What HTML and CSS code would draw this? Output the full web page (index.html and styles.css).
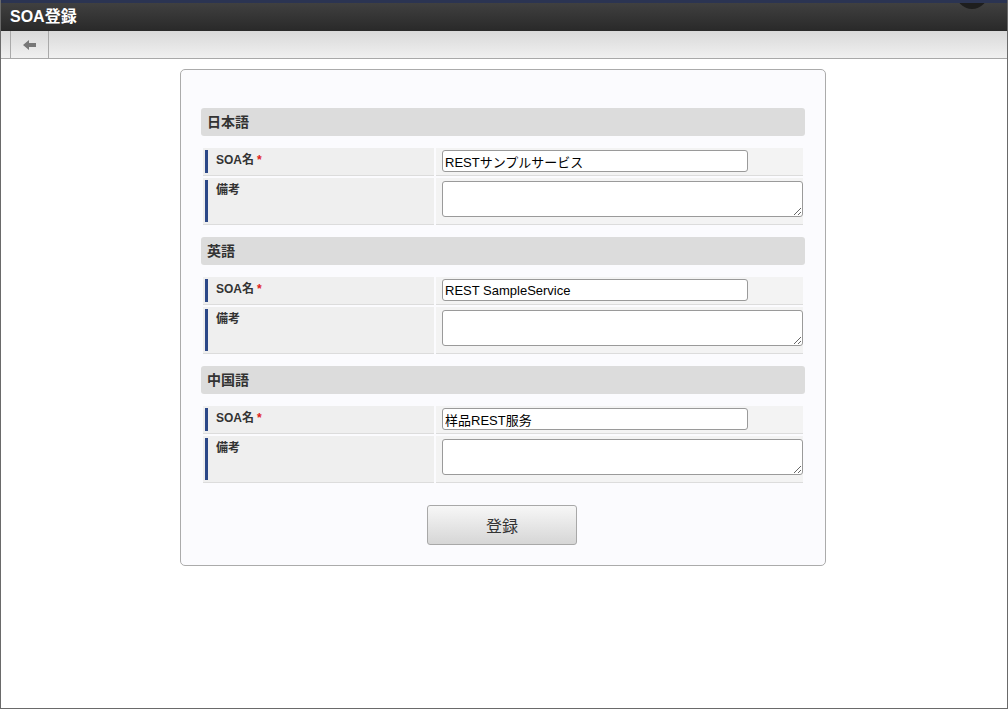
FILE: index.html
```html
<!DOCTYPE html>
<html lang="ja">
<head>
<meta charset="utf-8">
<title>SOA登録</title>
<link rel="stylesheet" href="styles.css">
</head>
<body>
<div class="frame">
  <header class="titlebar">
    <h1 class="title">SOA登録</h1>
    <span class="orb"></span>
  </header>
  <nav class="toolbar">
    <button class="back" type="button" aria-label="戻る">
      <svg width="14" height="12" viewBox="0 0 14 12"><path d="M0 6 L6 1 L6 4 L13 4 L13 8 L6 8 L6 11 Z" fill="#777"/></svg>
    </button>
  </nav>
  <main class="content">
    <section class="card">
      <div class="group">
        <h2 class="group-title">日本語</h2>
        <table class="form">
          <tr class="row-short">
            <th class="label"><div class="label-inner">SOA名<span class="req">*</span></div></th>
            <td class="value"><input class="text" type="text" value="RESTサンプルサービス"></td>
          </tr>
          <tr class="row-tall">
            <th class="label"><div class="label-inner">備考</div></th>
            <td class="value"><textarea class="area"></textarea></td>
          </tr>
        </table>
      </div>
      <div class="group">
        <h2 class="group-title">英語</h2>
        <table class="form">
          <tr class="row-short">
            <th class="label"><div class="label-inner">SOA名<span class="req">*</span></div></th>
            <td class="value"><input class="text" type="text" value="REST SampleService"></td>
          </tr>
          <tr class="row-tall">
            <th class="label"><div class="label-inner">備考</div></th>
            <td class="value"><textarea class="area"></textarea></td>
          </tr>
        </table>
      </div>
      <div class="group">
        <h2 class="group-title">中国語</h2>
        <table class="form">
          <tr class="row-short">
            <th class="label"><div class="label-inner">SOA名<span class="req">*</span></div></th>
            <td class="value"><input class="text" type="text" value="样品REST服务"></td>
          </tr>
          <tr class="row-tall">
            <th class="label"><div class="label-inner">備考</div></th>
            <td class="value"><textarea class="area"></textarea></td>
          </tr>
        </table>
      </div>
      <div class="actions">
        <button class="submit" type="button">登録</button>
      </div>
    </section>
  </main>
</div>
</body>
</html>
```

FILE: styles.css
```css
* { box-sizing: border-box; }
html, body { margin: 0; padding: 0; }
body {
  font-family: "Liberation Sans", "Noto Sans CJK JP", Arial, sans-serif;
  color: #333;
  background: #fff;
}
.frame {
  width: 1008px;
  height: 709px;
  border: 1px solid #6a6a6a;
  border-top: none;
  display: flex;
  flex-direction: column;
  overflow: hidden;
}
.titlebar {
  position: relative;
  height: 31px;
  margin: 0 -1px;
  border-top: 3px solid #2b3452;
  background: linear-gradient(#404040, #292929);
  display: flex;
  align-items: center;
  overflow: hidden;
}
.title {
  margin: 0 0 0 10px;
  font-size: 16px;
  line-height: 20px;
  font-weight: bold;
  color: #fff;
}
.orb {
  position: absolute;
  left: 956px;
  top: -26px;
  width: 32px;
  height: 32px;
  border-radius: 50%;
  background: #1e1e1e;
}
.toolbar {
  height: 28px;
  background: linear-gradient(#d9d9d9, #f0f0f0);
  border-bottom: 1px solid #a8a8a8;
  padding-left: 9px;
  display: flex;
}
.back {
  width: 39px;
  height: 27px;
  margin: 0;
  padding: 0;
  border: none;
  border-left: 1px solid #a9a9a9;
  border-right: 1px solid #a9a9a9;
  background: transparent;
  display: flex;
  align-items: center;
  justify-content: center;
}
.content {
  flex: 1;
  padding-top: 10px;
  padding-right: 2px;
  display: flex;
  justify-content: center;
}
.card {
  width: 646px;
  height: 497px;
  border: 1px solid #ababab;
  border-radius: 5px;
  background: #fbfbfe;
  padding: 38px 20px 20px 20px;
  display: flex;
  flex-direction: column;
}
.group { margin-bottom: 10px; }
.group-title {
  margin: 0;
  height: 28px;
  background: #dcdcdc;
  border-radius: 3px;
  padding-left: 6px;
  font-size: 14px;
  line-height: 28px;
  font-weight: bold;
  color: #333;
}
.form {
  margin-top: 10px;
  width: 604px;
  border-collapse: separate;
  border-spacing: 2px 2px;
}
.label {
  width: 232px;
  background: #efefef;
  border-bottom: 1px solid #dcdcdc;
  padding: 2px 2px;
  text-align: left;
  vertical-align: top;
  font-weight: normal;
}
.label-inner {
  border-left: 3px solid #2c4888;
  padding-left: 8px;
  font-size: 12px;
  font-weight: bold;
  color: #333;
  line-height: 18px;
  padding-top: 1px;
}
.row-short .label-inner { height: 23px; }
.row-tall .label-inner { height: 42px; }
.req { color: #e02020; margin-left: 3px; }
.value {
  background: #f3f3f3;
  border-bottom: 1px solid #dcdcdc;
  padding: 2px 0 2px 6px;
  vertical-align: top;
}
.text {
  display: block;
  width: 306px;
  height: 22px;
  margin: 0;
  padding: 1px 2px;
  border: 1px solid #9a9a9a;
  border-radius: 3px;
  background: #fff;
  font-family: "Liberation Sans", "Noto Sans CJK JP", Arial, sans-serif;
  font-size: 13px;
  color: #000;
}
.row-tall .value { padding-top: 3px; }
.area {
  display: block;
  width: 361px;
  height: 36px;
  margin: 0;
  border: 1px solid #9a9a9a;
  border-radius: 3px;
  background: #fff;
  resize: both;
  font-family: "Liberation Sans", "Noto Sans CJK JP", Arial, sans-serif;
}
.actions {
  display: flex;
  justify-content: center;
  margin-top: 10px;
  padding-right: 2px;
}
.submit {
  width: 150px;
  height: 40px;
  border: 1px solid #a8a8a8;
  border-radius: 3px;
  background: linear-gradient(#f7f7f7, #d6d6d6);
  font-family: "Liberation Sans", "Noto Sans CJK JP", Arial, sans-serif;
  font-size: 16px;
  color: #333;
}
```
